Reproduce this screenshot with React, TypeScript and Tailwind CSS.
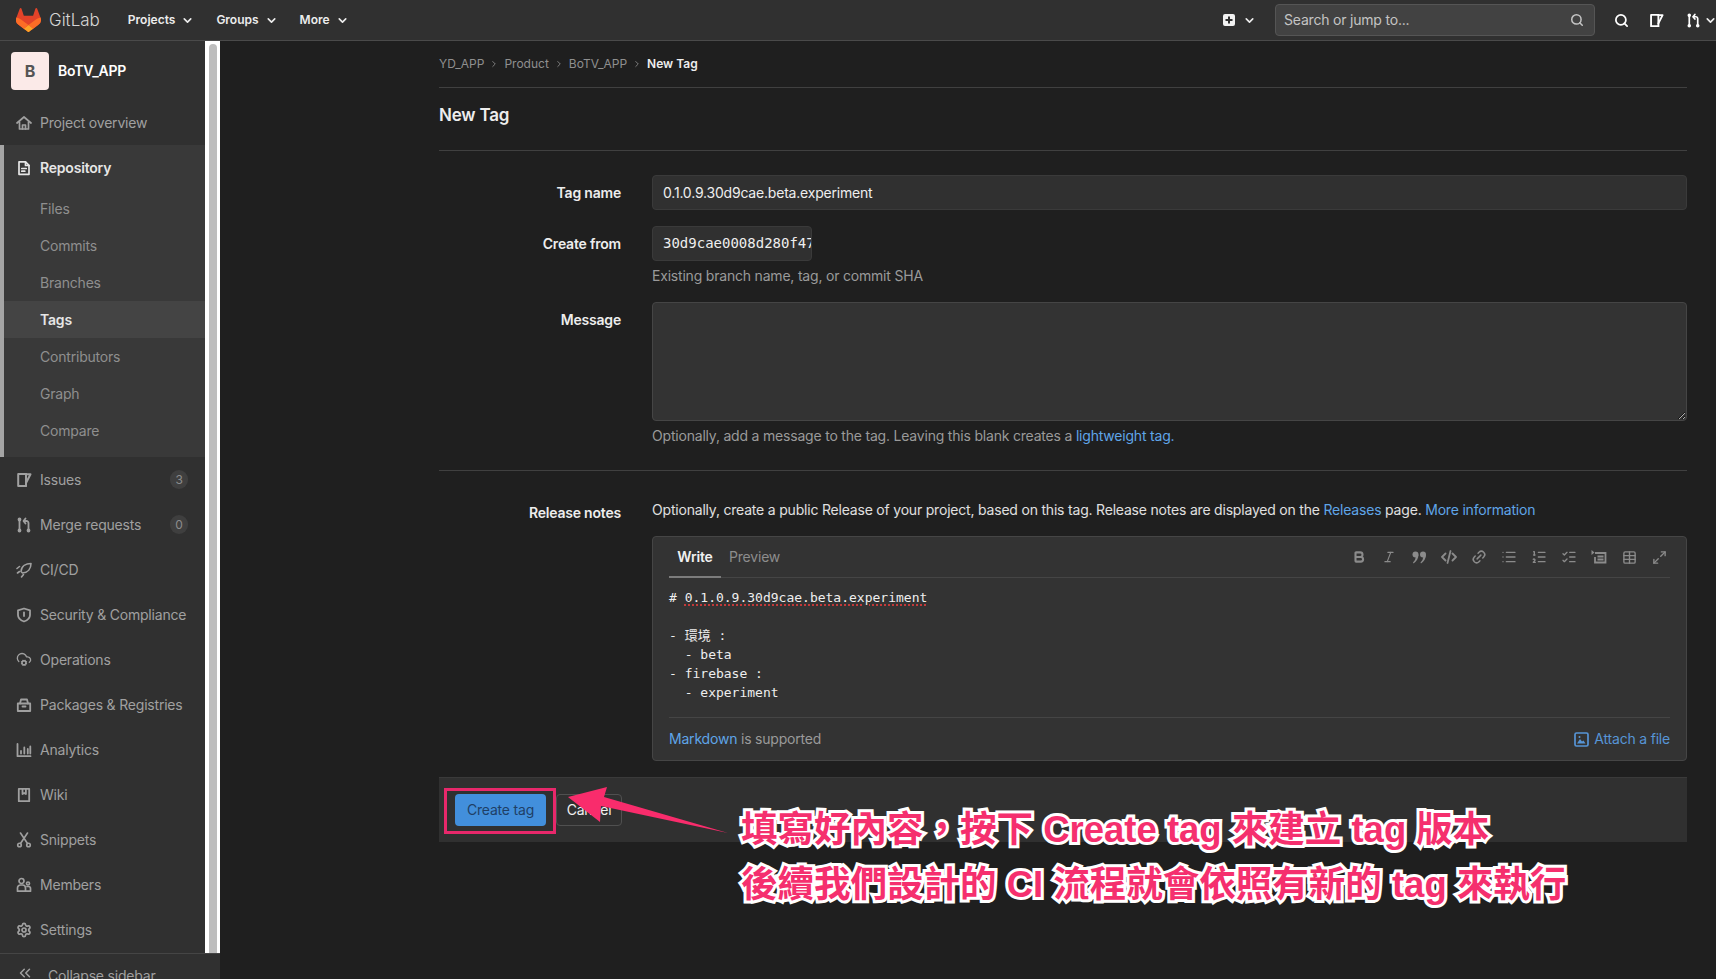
import React from 'react';
import { ChevronDown, ChevronRight, CloudCog, Settings, ChevronsLeft, Search, Bold, Italic, Link2, List, ListOrdered, ListChecks, Table, Maximize2 } from 'lucide-react';

const Ic = ({ children, size = 16, sw = 1.7, className = '' }: { children: React.ReactNode; size?: number; sw?: number; className?: string }) => (
  <svg width={size} height={size} viewBox="0 0 16 16" fill="none" stroke="currentColor" strokeWidth={sw} strokeLinecap="round" strokeLinejoin="round" className={className}>
    {children}
  </svg>
);

const HomeI = () => <Ic><path d="M1 8l7-6 7 6" /><path d="M3.5 7v7h9V7" /><path d="M6.5 14v-4h3v4" /></Ic>;
const DocI = () => <Ic><path d="M3 1.8h6.5L13 5.3v9H3z" /><path d="M9.5 2v3.5H13" /><path d="M5.8 8.5h4.4M5.8 11.2h3" /></Ic>;
const IssueI = ({ size = 16 }: { size?: number }) => <Ic size={size} sw={2}><path d="M10 2H2.2v12H10" /><path d="M10 2v12" /><path d="M10 2.2h4.5L10 11" /></Ic>;
const MrI = ({ size = 16 }: { size?: number }) => <Ic size={size} sw={1.8}><path d="M3.5 3v10" /><circle cx="3.5" cy="2.5" r="1" /><circle cx="3.5" cy="13.5" r="1" /><path d="M12.5 12.5V6a2 2 0 0 0-2-2H8" /><path d="M9.5 1.5 7.5 4l2 2.5" /><circle cx="12.5" cy="13.5" r="1" /></Ic>;
const CicdI = () => <Ic sw={1.6}><path d="M15 1.5C10 1.5 5.5 4 5 9.5l1.5 1.5c5.5-.5 8.500-4.500 8.500-9.500z" /><path d="M1 6.500l2.500-2M1.500 11l2-1.500M5.500 15l2-2.500" /></Ic>;
const ShieldI = () => <Ic sw={1.8}><path d="M8 1.5l6 1.8V8c0 3.2-2.6 5.4-6 6.5C4.6 13.400 2 11.200 2 8V3.300z" /><path d="M8 5.500v3.500" /></Ic>;
const BagI = () => <Ic sw={1.8}><path d="M1.800 6.500h12.400V14H1.800z" /><path d="M4 6.500 5 2.500h6l1 4" /><path d="M6.500 9.500h3" /></Ic>;
const ChartI = () => <Ic sw={1.8}><path d="M1.500 2v12.200h13" /><path d="M5 9v2.500M8.300 5.500v6M11.800 7v4.500M14.300 4.500v7" /></Ic>;
const BookI = () => <Ic sw={1.8}><path d="M2.800 1.800h10.400v12.400H2.800z" /><path d="M6.500 2v5l1.700-1 1.700 1V2" /></Ic>;
const ScissorsI = () => <Ic sw={1.6}><circle cx="3.500" cy="13" r="1.800" /><circle cx="12.500" cy="13" r="1.800" /><path d="M4.500 11.500 11.500 1M11.500 11.500 4.500 1" /></Ic>;
const MembersI = () => <Ic sw={1.7}><circle cx="5.500" cy="4" r="2.500" /><path d="M1.500 14.200V11a3 3 0 0 1 3-3h2a3 3 0 0 1 3 3v3.200z" /><circle cx="12" cy="6.500" r="1.500" /><path d="M11 9.500h1.500a2 2 0 0 1 2 2v2.700h-5" /></Ic>;

const TopItem = ({ icon, label, badge }: { icon: React.ReactNode; label: string; badge?: string }) => (
  <div className="flex h-[45px] shrink-0 items-center pl-4 pr-[17px] text-[#a0a0a0]">
    <span className="flex w-4 justify-center">{icon}</span>
    <span className="ml-2 flex-1 whitespace-nowrap">{label}</span>
    {badge && <span className="flex h-[19px] w-[18px] items-center justify-center rounded-full bg-[#3f3f3f] text-xs text-[#8d8d8d]">{badge}</span>}
  </div>
);

const SubItem = ({ label, active }: { label: string; active?: boolean }) => (
  <div className={`flex h-[37px] items-center pl-9 ${active ? 'bg-[#444444] font-semibold text-[#e6e6e6]' : 'text-[#8f8f8f]'}`}>{label}</div>
);

const Sidebar = () => (
  <aside className="relative flex h-full w-[220px] shrink-0 flex-col overflow-hidden">
    <div className="flex min-h-0 flex-1">
      <div className="flex w-[205px] flex-col bg-[#303030]">
        <div className="flex h-[59px] shrink-0 items-center pl-[11px]">
          <div className="flex h-[38px] w-[38px] items-center justify-center rounded bg-[#fbeae8] text-base font-bold text-[#555555]">B</div>
          <span className="ml-[9px] font-semibold text-white">BoTV_APP</span>
        </div>
        <TopItem icon={<HomeI />} label="Project overview" />
        <div className="h-[312px] shrink-0 border-l-4 border-[#a5a5a5] bg-[#393939] pb-2">
          <div className="flex h-[45px] items-center pl-3 font-semibold text-[#e6e6e6]">
            <span className="flex w-4 justify-center"><DocI /></span>
            <span className="ml-2">Repository</span>
          </div>
          <SubItem label="Files" />
          <SubItem label="Commits" />
          <SubItem label="Branches" />
          <SubItem label="Tags" active />
          <SubItem label="Contributors" />
          <SubItem label="Graph" />
          <SubItem label="Compare" />
        </div>
        <TopItem icon={<IssueI />} label="Issues" badge="3" />
        <TopItem icon={<MrI />} label="Merge requests" badge="0" />
        <TopItem icon={<CicdI />} label="CI/CD" />
        <TopItem icon={<ShieldI />} label="Security & Compliance" />
        <TopItem icon={<CloudCog size={17} strokeWidth={2} />} label="Operations" />
        <TopItem icon={<BagI />} label="Packages & Registries" />
        <TopItem icon={<ChartI />} label="Analytics" />
        <TopItem icon={<BookI />} label="Wiki" />
        <TopItem icon={<ScissorsI />} label="Snippets" />
        <TopItem icon={<MembersI />} label="Members" />
        <TopItem icon={<Settings size={16} strokeWidth={2.6} />} label="Settings" />
      </div>
      <div className="w-[15px] bg-white px-1 pt-[3px]">
        <div className="h-full w-2 rounded-t bg-[#bdbdbd]" />
      </div>
    </div>
    <div className="flex h-[26px] shrink-0 items-start border-t border-[#454545] bg-[#303030] pt-3 pl-4 text-[#a0a0a0]">
      <ChevronsLeft size={18} className="-mt-0.5" />
      <span className="ml-[14px] whitespace-nowrap">Collapse sidebar</span>
    </div>
  </aside>
);

const NavMenu = ({ label, className }: { label: string; className: string }) => (
  <div className={`flex items-center text-xs font-semibold tracking-normal text-[#ececec] ${className}`}>
    {label}
    <ChevronDown size={13} strokeWidth={3} className="ml-[6px]" />
  </div>
);

const Navbar = () => (
  <header className="flex h-[41px] shrink-0 items-center border-b border-[#4a4a4a] bg-[#303030] text-[#ececec]">
    <svg width="25" height="24" viewBox="0 0 25 24" className="ml-[16px]">
      <path d="M24.507 9.5l-.034-.09L21.082.562a.896.896 0 00-1.694.091l-2.29 7.01H7.825L5.535.653a.898.898 0 00-1.694-.09L.451 9.411.416 9.5a6.297 6.297 0 002.09 7.278l.012.01.03.022 5.16 3.867 2.56 1.935 1.554 1.176a1.051 1.051 0 001.268 0l1.555-1.176 2.56-1.935 5.197-3.89.014-.01A6.297 6.297 0 0024.507 9.5z" fill="#E24329" />
      <path d="M24.507 9.5l-.034-.09a11.44 11.44 0 00-4.56 2.051l-7.447 5.632 4.742 3.584 5.197-3.89.014-.01A6.297 6.297 0 0024.507 9.5z" fill="#FC6D26" />
      <path d="M7.707 20.677l2.56 1.935 1.555 1.176a1.051 1.051 0 001.268 0l1.555-1.176 2.56-1.935-4.743-3.584-4.755 3.584z" fill="#FCA326" />
      <path d="M5.01 11.461a11.43 11.43 0 00-4.56-2.05L.416 9.5a6.297 6.297 0 002.09 7.278l.012.01.03.022 5.16 3.867 4.745-3.584-7.444-5.632z" fill="#FC6D26" />
    </svg>
    <span className="ml-[8px] text-[17px] font-light tracking-normal text-[#d6d6d6]">GitLab</span>
    <NavMenu label="Projects" className="ml-[28px]" />
    <NavMenu label="Groups" className="ml-[22px]" />
    <NavMenu label="More" className="ml-[22px]" />
    <div className="ml-auto flex items-center">
      <svg width="14" height="14" viewBox="0 0 14 14"><path fillRule="evenodd" fill="#f2f2f2" d="M3 1h8a2 2 0 0 1 2 2v8a2 2 0 0 1-2 2H3a2 2 0 0 1-2-2V3a2 2 0 0 1 2-2zM6 3.500v2.500H3.500v2H6v2.500h2V8h2.500V6H8V3.500z" /></svg>
      <ChevronDown size={13} strokeWidth={3} className="ml-[7px]" />
      <div className="ml-[19px] flex h-8 w-[320px] items-center justify-between rounded border border-[#555555] bg-[#424242] pl-2 pr-[10px] text-[#c4c4c4]">
        <span>Search or jump to...</span>
        <Search size={14} strokeWidth={2.6} />
      </div>
      <Search size={15} strokeWidth={2.8} className="ml-[19px] text-white" />
      <span className="ml-[20px] text-white"><IssueI size={15} /></span>
      <span className="ml-[22px] text-white"><MrI size={15} /></span>
      <ChevronDown size={13} strokeWidth={3} className="ml-[3px] -mr-px" />
    </div>
  </header>
);

const Crumb = ({ label }: { label: string }) => (
  <>
    <span>{label}</span>
    <ChevronRight size={10} className="mx-[5px]" />
  </>
);

const ToolGlyph = ({ children }: { children: React.ReactNode }) => <span className="flex w-[30px] justify-center">{children}</span>;

const Toolbar = () => (
  <div className="flex items-center text-[#8b8b8b]">
    <ToolGlyph><Bold size={14} strokeWidth={3.6} /></ToolGlyph>
    <ToolGlyph><Italic size={14} strokeWidth={2} /></ToolGlyph>
    <ToolGlyph>
      <svg width="15" height="13" viewBox="0 0 15 13" fill="currentColor"><circle cx="3.500" cy="3.500" r="3" /><path d="M6.500 3.500c0 4-2 7-5 9l-.5-1c1.500-1.500 2.500-3 2.500-5z" /><circle cx="11" cy="3.500" r="3" /><path d="M14 3.500c0 4-2 7-5 9l-.5-1c1.500-1.500 2.500-3 2.500-5z" /></svg>
    </ToolGlyph>
    <ToolGlyph><svg width="16" height="14" viewBox="0 0 16 14" fill="none" stroke="currentColor" strokeWidth="1.800" strokeLinecap="round" strokeLinejoin="round"><path d="M4.500 3.500 1 7l3.500 3.500M11.500 3.500 15 7l-3.500 3.500M9.500 1 6.500 13" /></svg></ToolGlyph>
    <ToolGlyph><Link2 size={16} strokeWidth={2.2} className="-rotate-45" /></ToolGlyph>
    <ToolGlyph><List size={16} strokeWidth={2} /></ToolGlyph>
    <ToolGlyph><ListOrdered size={16} strokeWidth={2} /></ToolGlyph>
    <ToolGlyph><ListChecks size={16} strokeWidth={2} /></ToolGlyph>
    <ToolGlyph>
      <svg width="16" height="14" viewBox="0 0 16 14" fill="none" stroke="currentColor" strokeWidth="1.800"><path d="M4 3h10.500v9.500H4V7" /><path d="M6.500 6.500h6M6.500 9.500h6" /><path d="M.5 0v5l3-2.500z" fill="currentColor" stroke="none" /></svg>
    </ToolGlyph>
    <ToolGlyph><Table size={15} strokeWidth={2.2} /></ToolGlyph>
    <ToolGlyph><Maximize2 size={15} strokeWidth={2.2} /></ToolGlyph>
  </div>
);

const Editor = () => (
  <div className="mt-4 h-[225px] rounded border border-[#454545] bg-[#333333] px-4">
    <div className="flex h-[41px] items-stretch justify-between border-b border-[#454545]">
      <div className="flex">
        <div className="-mb-px flex w-[52px] items-center justify-center border-b-2 border-[#7c7c7c] font-semibold text-[#f0f0f0]">Write</div>
        <div className="ml-[8px] flex items-center text-[#8d8d8d]">Preview</div>
      </div>
      <div className="-mr-1 flex items-center"><Toolbar /></div>
    </div>
    <div className="h-[140px] whitespace-pre border-b border-[#454545] pt-[10px] font-['DejaVu_Sans_Mono','Noto_Sans_CJK_TC',monospace] text-[13px] leading-[19px] tracking-normal text-[#eeeeee]">
      <div># <span className="underline decoration-[#c23a3a] decoration-dotted decoration-2 underline-offset-2">0.1.0.9.30d9cae.beta.experiment</span></div>
      <div>&nbsp;</div>
      <div>- 環境 :</div>
      <div>  - beta</div>
      <div>- firebase :</div>
      <div>  - experiment</div>
    </div>
    <div className="flex h-[42px] items-center justify-between">
      <div className="text-[#9a9a9a]"><span className="text-[#5fa5e8]">Markdown</span> is supported</div>
      <div className="flex items-center text-[#5795d6]">
        <svg width="15" height="15" viewBox="0 0 15 15" fill="none" stroke="currentColor" strokeWidth="1.700"><rect x="1" y="1" width="13" height="13" rx="1.500" /><path d="M3 11.500 6 7l2 2.500 1.500-1 2 3z" fill="currentColor" stroke="none" /><circle cx="5.500" cy="5" r="1" fill="currentColor" stroke="none" /></svg>
        <span className="ml-[5px]">Attach a file</span>
      </div>
    </div>
  </div>
);

const Label = ({ children, className = '' }: { children: React.ReactNode; className?: string }) => (
  <div className={`text-right font-semibold text-[#ededed] ${className}`}>{children}</div>
);

const Form = () => (
  <main className="flex min-w-0 flex-1 flex-col bg-[#1f1f1f] pl-[219px] pr-[29px]">
    <div className="flex h-[47px] shrink-0 items-center border-b border-[#404040] text-xs tracking-normal text-[#8f8f8f]">
      <Crumb label="YD_APP" />
      <Crumb label="Product" />
      <Crumb label="BoTV_APP" />
      <span className="font-semibold text-[#ededed]">New Tag</span>
    </div>
    <h1 className="flex h-[63px] shrink-0 items-center border-b border-[#404040] pb-2 text-[17px] font-semibold text-[#ededed]">New Tag</h1>
    <div className="grid grid-cols-[182px_1fr] gap-x-[31px] pt-6">
      <Label className="pt-2">Tag name</Label>
      <input readOnly defaultValue="0.1.0.9.30d9cae.beta.experiment" className="h-[35px] w-full rounded border border-[#3a3a3a] bg-[#303030] px-[10px] text-[#eeeeee] outline-none" />
      <Label className="mt-4 pt-2">Create from</Label>
      <div className="mt-4">
        <input readOnly defaultValue="30d9cae0008d280f47" className="block h-[35px] w-[160px] rounded border border-[#3a3a3a] bg-[#303030] pb-[2px] pl-[10px] pr-0 font-['DejaVu_Sans_Mono',monospace] tracking-normal text-[#eeeeee] outline-none" />
        <div className="mt-[5px] text-[#9a9a9a]">Existing branch name, tag, or commit SHA</div>
      </div>
      <Label className="mt-4 pt-2">Message</Label>
      <div className="mt-4">
        <textarea readOnly className="block h-[119px] w-full rounded border border-[#454545] bg-[#333333] outline-none" />
        <div className="mt-[5px] text-[#9a9a9a]">Optionally, add a message to the tag. Leaving this blank creates a <span className="text-[#5fa5e8]">lightweight tag.</span></div>
      </div>
    </div>
    <div className="mt-6 border-t border-[#404040]" />
    <div className="grid grid-cols-[182px_1fr] gap-x-[31px] pt-[29px]">
      <Label className="pt-[3px]">Release notes</Label>
      <div>
        <div className="text-[#e0e0e0]">Optionally, create a public Release of your project, based on this tag. Release notes are displayed on the <span className="text-[#5fa5e8]">Releases</span> page. <span className="text-[#5fa5e8]">More information</span></div>
        <Editor />
      </div>
    </div>
    <div className="mt-4 flex h-[65px] shrink-0 items-center gap-[10px] border-t border-[#3a3a3a] bg-[#303030] pl-4">
      <div className="flex h-[32px] w-[91px] items-center justify-center rounded bg-[#428fdc] text-[#1f3f66]">Create tag</div>
      <div className="flex h-[32px] w-[66px] items-center justify-center rounded border border-[#505050] text-[#f0f0f0]">Cancel</div>
    </div>
  </main>
);

const Annotation = () => (
  <div className="pointer-events-none absolute inset-0 overflow-hidden">
    <div className="absolute left-[444px] top-[788px] h-[46px] w-[112px] border-[3px] border-[#e8286b]" />
    <svg className="absolute left-[560px] top-[780px]" width="180" height="60" viewBox="560 780 180 60">
      <polygon points="728,833 604,797 607,787 568,797 600,822 601,806" fill="#f92c6c" />
    </svg>
    <div className="absolute left-[741px] top-[802px] whitespace-nowrap font-['Liberation_Sans','Noto_Sans_CJK_TC',sans-serif] text-[36.5px] font-bold leading-[55px] tracking-normal text-[#f52f6e] [-webkit-text-stroke:6px_#ffffff] [paint-order:stroke_fill]">
      <div>{'填寫好內容\uFF0C按下 Create tag 來建立 tag 版本'}</div>
      <div>後續我們設計的 CI 流程就會依照有新的 tag 來執行</div>
    </div>
  </div>
);

export default function App() {
  return (
    <div className="relative flex h-[979px] w-[1716px] flex-col overflow-hidden bg-[#1f1f1f] font-['Inter','Noto_Sans_CJK_TC',sans-serif] text-sm tracking-[-0.2px]">
      <Navbar />
      <div className="flex min-h-0 flex-1">
        <Sidebar />
        <Form />
      </div>
      <Annotation />
    </div>
  );
}
